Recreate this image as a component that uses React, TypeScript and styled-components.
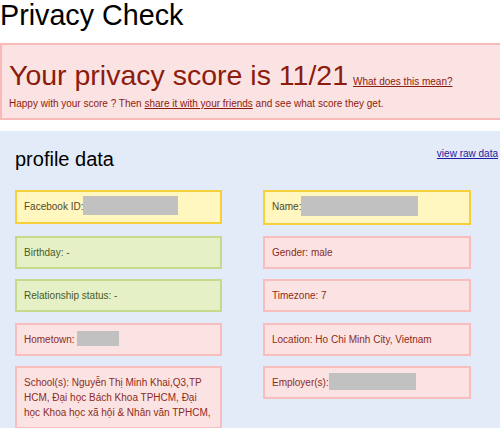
import React from "react";
import styled, { createGlobalStyle } from "styled-components";

const GlobalStyle = createGlobalStyle`
  html, body {
    margin: 0;
    padding: 0;
    background: #ffffff;
    overflow: hidden;
  }
  body {
    font-family: "Liberation Sans", Arial, sans-serif;
    color: #000000;
  }
`;

type Tone = "yellow" | "green" | "pink";

const tones: Record<Tone, { bg: string; border: string; text: string }> = {
  yellow: { bg: "#fff6c0", border: "#f6cf3a", text: "#54491f" },
  green: { bg: "#e6f0c6", border: "#c6da8b", text: "#4b5a21" },
  pink: { bg: "#fce3e3", border: "#f8bebe", text: "#8c2c20" },
};

const Page = styled.div`
  width: 500px;
`;

const Title = styled.h1`
  margin: 0;
  font-size: 28.7px;
  font-weight: normal;
  line-height: 30px;
`;

const ScoreBox = styled.div`
  margin-top: 13px;
  width: calc(100% + 20px);
  box-sizing: border-box;
  background: #fce3e3;
  border: 2px solid #f8b9b9;
  padding: 13px 7px 8px 7px;
  color: #8b1c0e;
`;

const ScoreLine = styled.div`
  font-size: 28.5px;
  line-height: 34px;
  white-space: nowrap;
`;

const SmallLink = styled.a`
  font-size: 10px;
  line-height: 10px;
  color: inherit;
  text-decoration: underline;
  margin-left: 5px;
`;

const ShareLine = styled.div`
  margin-top: 5px;
  font-size: 10px;
  line-height: 13px;

  a {
    color: inherit;
    text-decoration: underline;
  }
`;

const Panel = styled.div`
  margin-top: 11px;
  background: #e3eaf8;
  padding: 16px 2px 20px 15px;
  min-height: 300px;
`;

const PanelHeader = styled.div`
  display: flex;
  justify-content: space-between;
  align-items: flex-start;
`;

const Heading = styled.h2`
  margin: 0;
  font-size: 20px;
  font-weight: normal;
  line-height: 24px;
`;

const RawLink = styled.a`
  font-size: 10px;
  line-height: 13px;
  color: #1c1ca0;
  text-decoration: underline;
`;

const Grid = styled.div`
  margin-top: 19px;
  display: grid;
  grid-template-columns: 207px 208px;
  column-gap: 41px;
  row-gap: 10.5px;
  align-items: start;
`;

const Field = styled.div<{ $tone: Tone }>`
  box-sizing: border-box;
  min-height: 33px;
  padding: 7px 7px;
  font-size: 10px;
  line-height: 15px;
  white-space: nowrap;
  background: ${(p) => tones[p.$tone].bg};
  border: 2px solid ${(p) => tones[p.$tone].border};
  color: ${(p) => tones[p.$tone].text};
`;

const Redacted = styled.span<{ $w: number; $h: number; $dy: number }>`
  display: inline-block;
  width: ${(p) => p.$w}px;
  height: ${(p) => p.$h}px;
  margin-top: -10px;
  background: #c1c1c1;
  vertical-align: ${(p) => -p.$dy}px;
`;

export default function App() {
  return (
    <Page>
      <GlobalStyle />
      <Title>Privacy Check</Title>
      <ScoreBox>
        <ScoreLine>
          Your privacy score is 11/21
          <SmallLink href="#">What does this mean?</SmallLink>
        </ScoreLine>
        <ShareLine>
          Happy with your score ? Then <a href="#">share it with your friends</a> and see
          what score they get.
        </ShareLine>
      </ScoreBox>
      <Panel>
        <PanelHeader>
          <Heading>profile data</Heading>
          <RawLink href="#">view raw data</RawLink>
        </PanelHeader>
        <Grid>
          <Field $tone="yellow">
            Facebook ID:<Redacted $w={95} $h={19} $dy={5} />
          </Field>
          <Field $tone="yellow">
            Name:<Redacted $w={117} $h={20} $dy={6} />
          </Field>
          <Field $tone="green">Birthday: -</Field>
          <Field $tone="pink">Gender: male</Field>
          <Field $tone="green">Relationship status: -</Field>
          <Field $tone="pink">Timezone: 7</Field>
          <Field $tone="pink">
            Hometown: <Redacted $w={42} $h={15} $dy={3} />
          </Field>
          <Field $tone="pink">Location: Ho Chi Minh City, Vietnam</Field>
          <Field $tone="pink">
            School(s): Nguyễn Thị Minh Khai,Q3,TP
            <br />
            HCM, Đại học Bách Khoa TPHCM, Đại
            <br />
            học Khoa học xã hội &amp; Nhân văn TPHCM,
          </Field>
          <Field $tone="pink">
            Employer(s):<Redacted $w={87} $h={17} $dy={4} />
          </Field>
        </Grid>
      </Panel>
    </Page>
  );
}
